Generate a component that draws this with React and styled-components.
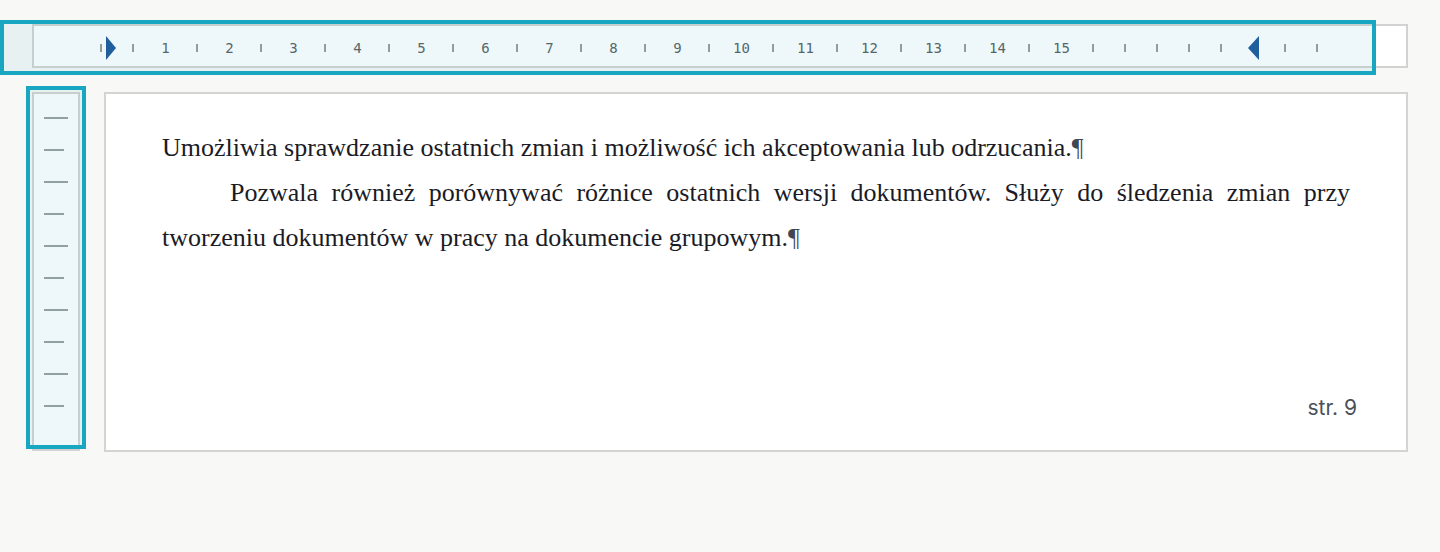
import React from 'react';
import styled, { createGlobalStyle } from 'styled-components';

const GlobalStyle = createGlobalStyle`
  html, body {
    margin: 0;
    padding: 0;
    background: #f8f8f6;
  }
  body {
    font-family: "Liberation Sans", Arial, sans-serif;
  }
`;

const SLOTS = 39;

function rulerSlot(k) {
  if (k === 0) return { kind: 'tick', marker: 'left' };
  if (k === 36) return { kind: 'empty', marker: 'right' };
  if (k % 2 === 0 && k <= 30) return { kind: 'num', label: String(k / 2) };
  return { kind: 'tick' };
}

function App() {
  const slots = Array.from({ length: SLOTS }, (_, k) => rulerSlot(k));
  const vticks = Array.from({ length: 10 }, (_, i) => i % 2 === 0);

  return (
    <>
      <GlobalStyle />
      <Page>
        <TopRow>
          <HRuler>
            {slots.map((s, k) => (
              <Slot key={k}>
                {s.kind === 'tick' && <Tick />}
                {s.kind === 'num' && <Num>{s.label}</Num>}
                {s.marker && <Indent $side={s.marker} />}
              </Slot>
            ))}
          </HRuler>
          <Highlight $top="-4px" $left="-32px" $width="1376px" $height="55px" />
        </TopRow>

        <BodyRow>
          <VRulerWrap>
            <VRuler>
              {vticks.map((long, i) => (
                <VTick key={i} $long={long} />
              ))}
            </VRuler>
            <Highlight $top="-6px" $left="-6px" $width="60px" $height="363px" />
          </VRulerWrap>

          <Sheet>
            <Text>
              <Para>
                Umożliwia sprawdzanie ostatnich zmian i możliwość ich akceptowania lub odrzucania.<Pilcrow>¶</Pilcrow>
              </Para>
              <Para $indent>
                Pozwala również porównywać różnice ostatnich wersji dokumentów. Służy do śledzenia zmian przy tworzeniu dokumentów w pracy na dokumencie grupowym.<Pilcrow>¶</Pilcrow>
              </Para>
            </Text>
            <PageNo>str. 9</PageNo>
          </Sheet>
        </BodyRow>
      </Page>
    </>
  );
}

const Page = styled.div`
  padding: 24px 32px 0 32px;
  display: flex;
  flex-direction: column;
  gap: 24px;
`;

const TopRow = styled.div`
  position: relative;
`;

const HRuler = styled.div`
  height: 40px;
  border: 2px solid #d2d3d0;
  background: #ffffff;
  display: flex;
  align-items: center;
  padding-left: 51px;
`;

const Slot = styled.div`
  position: relative;
  width: 32px;
  flex: 0 0 32px;
  height: 100%;
  display: flex;
  align-items: center;
  justify-content: center;
`;

const Tick = styled.div`
  width: 2px;
  height: 8px;
  background: #9a9d9d;
  margin-top: 4px;
`;

const Num = styled.span`
  font-family: "DejaVu Sans Mono", "Liberation Mono", monospace;
  font-size: 14px;
  color: #5b6262;
  margin: 4px 0 0 1px;
`;

const Indent = styled.div`
  position: absolute;
  top: 10px;
  width: 0;
  height: 0;
  border-top: 12px solid transparent;
  border-bottom: 12px solid transparent;
  ${(p) =>
    p.$side === 'left'
      ? `left: 21px; border-left: 10px solid #22599b;`
      : `left: 11px; border-right: 11px solid #22599b;`}
`;

const Highlight = styled.div`
  position: absolute;
  top: ${(p) => p.$top};
  left: ${(p) => p.$left};
  width: ${(p) => p.$width};
  height: ${(p) => p.$height};
  box-sizing: border-box;
  border: 4px solid #18a6c0;
  background: rgba(24, 166, 192, 0.075);
  pointer-events: none;
`;

const BodyRow = styled.div`
  display: flex;
  gap: 24px;
  align-items: flex-start;
`;

const VRulerWrap = styled.div`
  position: relative;
`;

const VRuler = styled.div`
  border: 2px solid #d2d3d0;
  background: #ffffff;
  display: flex;
  flex-direction: column;
  gap: 30px;
  padding: 23px 0 0 10px;
  box-sizing: content-box;
  width: 34px;
  height: 332px;
`;

const VTick = styled.div`
  height: 2px;
  width: ${(p) => (p.$long ? '24px' : '20px')};
  background: #9aa2a1;
`;

const Sheet = styled.div`
  flex: 1;
  border: 2px solid #d4d4d0;
  background: #ffffff;
  display: flex;
  flex-direction: column;
  justify-content: space-between;
  padding: 31px 56px 30px 56px;
  box-sizing: border-box;
  height: 360px;
`;

const Text = styled.div`
  font-family: "Liberation Serif", "Times New Roman", serif;
  font-size: 26px;
  line-height: 45px;
  color: #1b1b26;
`;

const Para = styled.p`
  margin: 0;
  text-align: justify;
  text-indent: ${(p) => (p.$indent ? '68px' : '0')};
`;

const Pilcrow = styled.span`
  color: #3d4756;
`;

const PageNo = styled.div`
  align-self: flex-end;
  font-family: Inter, "Noto Sans", sans-serif;
  font-size: 21px;
  color: #4a5058;
  margin-right: -7px;
`;

export default App;
